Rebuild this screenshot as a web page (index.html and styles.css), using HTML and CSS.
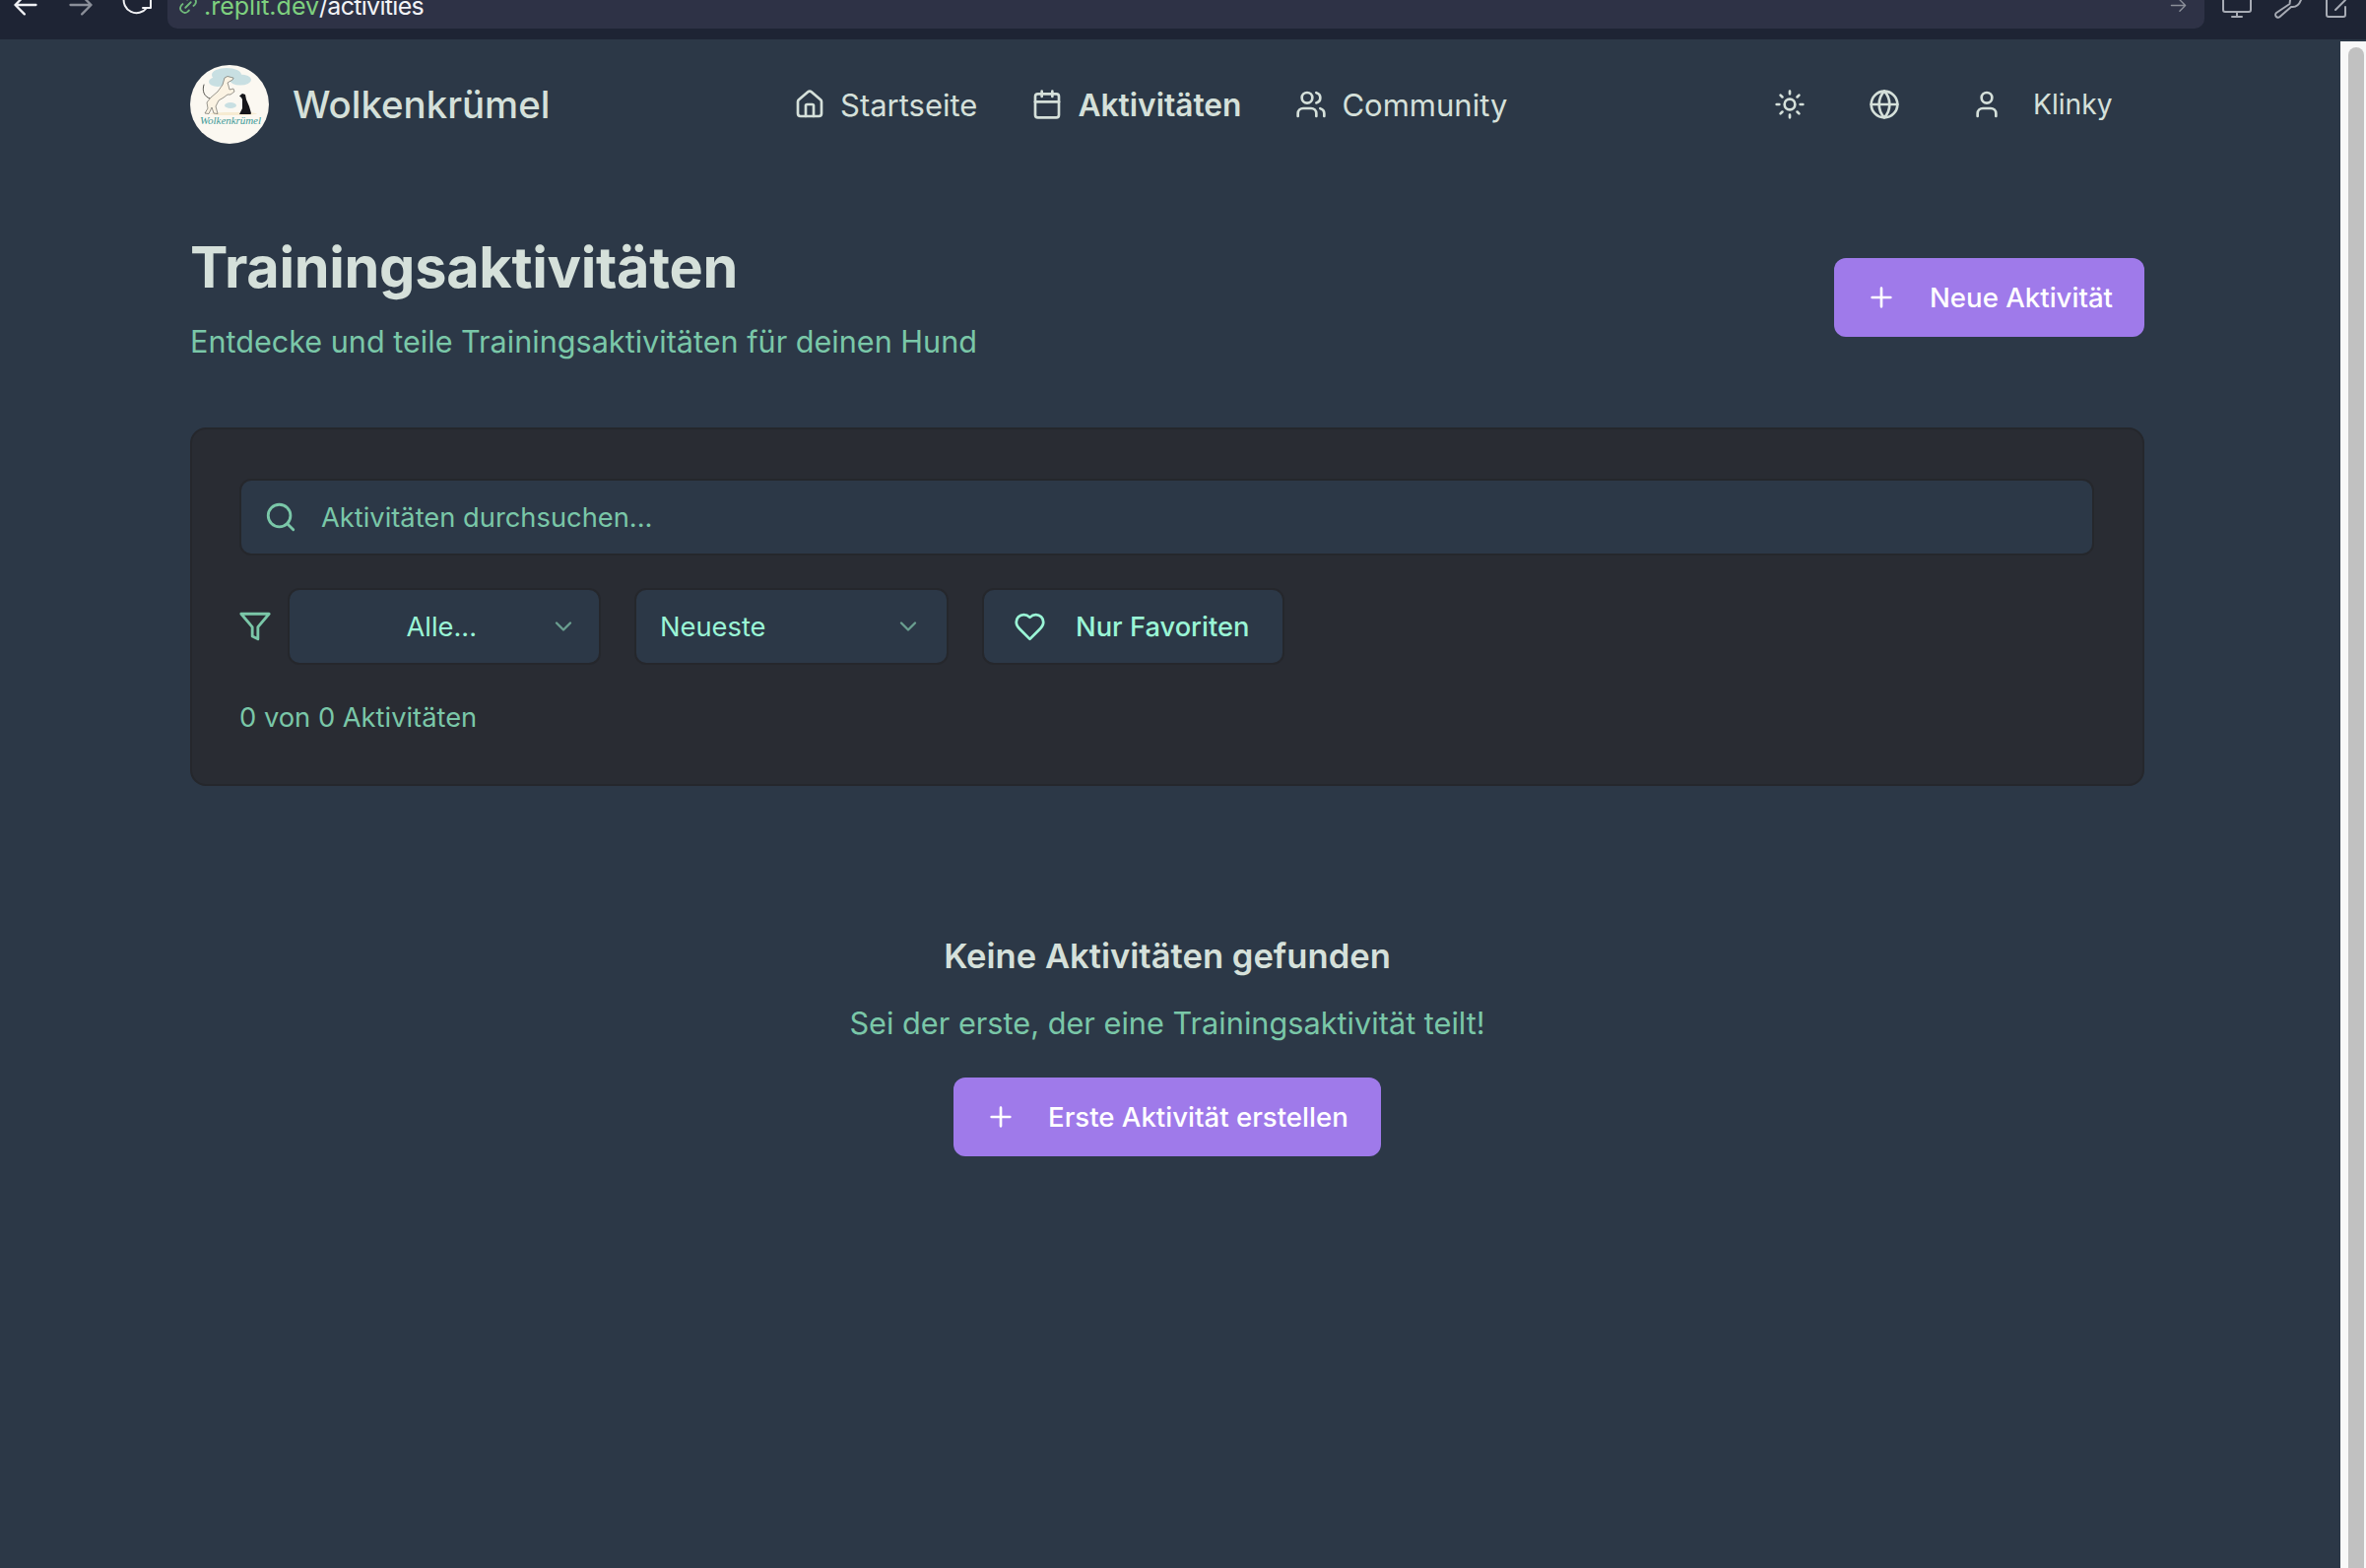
FILE: index.html
```html
<!DOCTYPE html>
<html lang="de">
<head>
<meta charset="utf-8">
<title>Wolkenkrümel</title>
<link rel="stylesheet" href="styles.css">
</head>
<body>
<div class="chrome">
  <div class="chrome-nav">
    <svg class="ci ci-light" viewBox="0 0 24 24"><path d="M21 12H3M11 4l-8 8 8 8"/></svg>
    <svg class="ci ci-dim" viewBox="0 0 24 24"><path d="M3 12h18M13 4l8 8-8 8"/></svg>
    <svg class="ci-reload" viewBox="0 0 32 32"><path d="M4 10A13 13 0 0 0 27 21M23 21h8V10"/></svg>
  </div>
  <div class="urlbar">
    <svg class="link-ic" viewBox="0 0 24 24"><path d="M9 15l6-6"/><path d="M11 6l1.500-1.500a5 5 0 0 1 7 7L18 13"/><path d="M13 18l-1.500 1.500a5 5 0 0 1-7-7L6 11"/></svg>
    <span class="url"><span class="url-host">.replit.dev</span><span class="url-path">/activities</span></span>
    <svg class="url-go" viewBox="0 0 24 24"><path d="M2 12h20M14 4l8 8-8 8"/></svg>
  </div>
  <div class="chrome-tools">
    <svg class="ct ct-monitor" viewBox="0 0 30 20"><path d="M1 0v10a2 2 0 0 0 2 2h24a2 2 0 0 0 2-2V0M15 12v5M10 17h10"/></svg>
    <svg class="ct ct-wrench" viewBox="0 0 28 20"><path d="M16 0l-.500 4L2 13a2.500 2.500 0 0 0 3.500 4L17 7q7 1 10-7"/></svg>
    <svg class="ct ct-share" viewBox="0 0 24 20"><path d="M2 0v15a2 2 0 0 0 2 2h15a2 2 0 0 0 2-2V7M11 10L21 0"/></svg>
  </div>
</div>

<div class="viewport">
  <div class="page">
    <header class="topbar">
      <a class="brand">
        <svg class="logo" viewBox="0 0 80 80">
          <circle cx="40" cy="40" r="40" fill="#fbf8f1"/>
          <g fill="#c8dfe2">
            <ellipse cx="37" cy="10" rx="15" ry="7"/>
            <ellipse cx="28" cy="17" rx="9" ry="5"/>
            <ellipse cx="51" cy="15" rx="11" ry="5.500"/>
            <ellipse cx="41" cy="41" rx="6" ry="3"/>
          </g>
          <ellipse cx="44" cy="49.500" rx="24" ry="1.600" fill="#f6ebd2"/>
          <path d="M20 34C14 32 12 26 14 20" fill="none" stroke="#55534e" stroke-width="1"/>
          <path d="M43.700 13L38 11.500 35 13 33 20 28 27 21 33 17 38 18 44 15 49 19 49.500 22 43 24 49 28 49.500 26 42 29 36 34 33 38 30 41 30 45 27 44 24 40 25 39 21 38 18 43 15z" fill="#fbf3e3" stroke="#6f6d66" stroke-width=".7" stroke-linejoin="round"/>
          <path d="M50 31.500L53 29 56 30 57 35 60 42 62 49 61.500 50 50 50 53 44 53 35 52 33z" fill="#15151a"/>
          <text class="logo-text" x="10" y="60" textLength="62">Wolkenkrümel</text>
        </svg>
        <span class="brand-name">Wolkenkrümel</span>
      </a>
      <nav class="nav">
        <a class="nav-link">
          <svg class="ic ic-nav" viewBox="0 0 24 24"><path d="M15 21v-8a1 1 0 0 0-1-1h-4a1 1 0 0 0-1 1v8"/><path d="M3 10a2 2 0 0 1 .7-1.500l7-6a2 2 0 0 1 2.600 0l7 6a2 2 0 0 1 .7 1.500v9a2 2 0 0 1-2 2H5a2 2 0 0 1-2-2z"/></svg>
          <span>Startseite</span>
        </a>
        <a class="nav-link nav-active">
          <svg class="ic ic-nav" viewBox="0 0 24 24"><path d="M8 2v4M16 2v4"/><rect x="3" y="4" width="18" height="18" rx="2"/><path d="M3 10h18"/></svg>
          <span>Aktivitäten</span>
        </a>
        <a class="nav-link">
          <svg class="ic ic-nav" viewBox="0 0 24 24"><path d="M16 21v-2a4 4 0 0 0-4-4H6a4 4 0 0 0-4 4v2"/><circle cx="9" cy="7" r="4"/><path d="M22 21v-2a4 4 0 0 0-3-3.870M16 3.130a4 4 0 0 1 0 7.750"/></svg>
          <span>Community</span>
        </a>
      </nav>
      <div class="actions">
        <svg class="ic ic-nav" viewBox="0 0 24 24"><circle cx="12" cy="12" r="4"/><path d="M12 2v2M12 20v2M4.930 4.930l1.410 1.410M17.660 17.660l1.410 1.410M2 12h2M20 12h2M6.340 17.660l-1.410 1.410M19.070 4.930l-1.410 1.410"/></svg>
        <svg class="ic ic-nav" viewBox="0 0 24 24"><circle cx="12" cy="12" r="10"/><path d="M12 2a14.500 14.500 0 0 0 0 20 14.500 14.500 0 0 0 0-20M2 12h20"/></svg>
        <a class="user">
          <svg class="ic ic-nav" viewBox="0 0 24 24"><path d="M19 21v-2a4 4 0 0 0-4-4H9a4 4 0 0 0-4 4v2"/><circle cx="12" cy="7" r="4"/></svg>
          <span>Klinky</span>
        </a>
      </div>
    </header>

    <main class="content">
      <section class="head">
        <div>
          <h1 class="title">Trainingsaktivitäten</h1>
          <p class="subtitle">Entdecke und teile Trainingsaktivitäten für deinen Hund</p>
        </div>
        <button class="btn btn-new">
          <svg class="ic ic-btn" viewBox="0 0 24 24"><path d="M5 12h14M12 5v14"/></svg>
          <span>Neue Aktivität</span>
        </button>
      </section>

      <section class="card">
        <div class="search">
          <svg class="ic ic-green ic-search" viewBox="0 0 24 24"><path d="m21 21-4.300-4.300"/><circle cx="11" cy="11" r="8"/></svg>
          <span class="placeholder">Aktivitäten durchsuchen...</span>
        </div>
        <div class="filters">
          <svg class="ic ic-green ic-funnel" viewBox="0 0 24 24"><path d="M22 3H2l8 9.460V19l4 2v-8.540z"/></svg>
          <div class="select select-all">
            <span class="select-center">Alle...</span>
            <svg class="chev" viewBox="0 0 24 24"><path d="m6 9 6 6 6-6"/></svg>
          </div>
          <div class="select select-sort">
            <span>Neueste</span>
            <svg class="chev" viewBox="0 0 24 24"><path d="m6 9 6 6 6-6"/></svg>
          </div>
          <div class="select fav">
            <svg class="ic ic-mint ic-heart" viewBox="0 0 24 24"><path d="M19 14c1.490-1.460 3-3.210 3-5.500A5.500 5.500 0 0 0 16.500 3c-1.760 0-3 .5-4.500 2-1.500-1.500-2.740-2-4.500-2A5.500 5.500 0 0 0 2 8.500c0 2.300 1.500 4.050 3 5.500l7 7z"/></svg>
            <span>Nur Favoriten</span>
          </div>
        </div>
        <p class="count">0 von 0 Aktivitäten</p>
      </section>

      <section class="empty">
        <h2 class="empty-title">Keine Aktivitäten gefunden</h2>
        <p class="empty-text">Sei der erste, der eine Trainingsaktivität teilt!</p>
        <button class="btn btn-first">
          <svg class="ic ic-btn" viewBox="0 0 24 24"><path d="M5 12h14M12 5v14"/></svg>
          <span>Erste Aktivität erstellen</span>
        </button>
      </section>
    </main>
  </div>
  <div class="scrollbar"><div class="thumb"></div></div>
</div>
</body>
</html>
```

FILE: styles.css
```css
* { box-sizing: border-box; }
html, body { height: 100%; }
body {
  margin: 0;
  display: flex;
  flex-direction: column;
  overflow: hidden;
  background: #2c3847;
  font-family: "Inter", "Liberation Sans", sans-serif;
  color: #d5e0da;
}
svg { display: block; flex: none; fill: none; stroke-linecap: round; stroke-linejoin: round; }

/* browser chrome */
.chrome {
  flex: none;
  height: 40px;
  background: #1e2434;
  display: flex;
  overflow: hidden;
  align-items: flex-start;
}
.chrome-nav { width: 170px; height: 20px; display: flex; align-items: flex-start; gap: 28px; padding-left: 12px; }
.ci { width: 28px; height: 28px; stroke-width: 2; margin-top: -9px; }
.ci-light { stroke: #f0f1f4; }
.ci-dim { stroke: #8b8f99; }
.ci-reload { width: 32px; height: 32px; margin: -13px 0 0 -2px; stroke: #f0f1f4; stroke-width: 2; }
.urlbar {
  width: 2068px;
  height: 29px;
  background: #2e3246;
  border-radius: 0 0 10px 10px;
  display: flex;
  align-items: flex-start;
  padding: 0 18px 0 10px;
  color: #fff;
}
.link-ic { width: 22px; height: 22px; stroke: #6fb87a; stroke-width: 2; margin: -6px 5px 0 0; }
.url { font-size: 25px; line-height: 30px; margin-top: -9px; color: #f2f3f6; white-space: nowrap; }
.url-host { color: #7ed07f; }
.url-path { letter-spacing: -0.7px; }
.url-go { width: 17px; height: 17px; stroke: #8b8f99; stroke-width: 2; margin: -3px 0 0 auto; }
.chrome-tools { display: flex; align-items: flex-start; padding-left: 18px; }
.ct { height: 20px; stroke: #a7abb4; stroke-width: 2; }
.ct-monitor { width: 30px; }
.ct-wrench { width: 28px; margin-left: 23px; }
.ct-share { width: 24px; margin-left: 23px; }

/* viewport */
.viewport { flex: 1; display: flex; min-height: 0; }
.page { flex: 1; min-width: 0; padding: 0 199px 0 193px; }
.scrollbar { flex: none; width: 26px; margin-top: 2px; background: #f8f8f8; padding: 6px 2px 0 8px; }
.thumb { height: 100%; background: #c1c1c1; border-radius: 8px 8px 0 0; }

/* top bar */
.topbar { display: flex; align-items: center; height: 80px; margin-top: 26px; }
.brand { display: flex; align-items: center; gap: 24px; width: 613px; }
.logo { width: 80px; height: 80px; }
.logo-text { font-family: "Liberation Serif", serif; font-style: italic; font-size: 11px; fill: #3f9a98; }
.brand-name { font-size: 38.400px; font-weight: 500; color: #d5e0da; }
.nav { display: flex; gap: 55px; width: 995px; }
.nav-link { display: flex; align-items: center; gap: 15px; font-size: 31px; font-weight: 400; }
.nav-active { font-size: 31.700px; font-weight: 600; }
.ic { width: 32px; height: 32px; stroke: currentColor; stroke-width: 2; }
.actions { display: flex; align-items: center; gap: 64px; }
.user { display: flex; align-items: center; gap: 31px; margin-left: 8px; font-size: 28.200px; }

/* content */
.content { display: flex; flex-direction: column; }
.head { display: flex; justify-content: space-between; align-items: flex-start; margin-top: 93px; }
.title { margin: 0; font-size: 57.600px; font-weight: 700; line-height: 64px; letter-spacing: -0.3px; color: #d5e0da; }
.subtitle { margin: 20px 0 0; font-size: 30.600px; line-height: 48px; color: #7ac7a8; }
.btn {
  display: flex;
  align-items: center;
  height: 80px;
  border: 0;
  border-radius: 12px;
  background: #9f7aea;
  color: #fff;
  font: 500 27.600px "Inter", "Liberation Sans", sans-serif;
}
.btn-new { width: 315px; margin-top: 23px; padding-left: 32px; gap: 33px; }
.btn-first { width: 434px; padding-left: 32px; gap: 32px; margin-top: 31px; }
.ic-btn { width: 32px; height: 32px; }

/* card */
.card {
  margin-top: 63px;
  height: 364px;
  padding: 50px 49px 50px 48px;
  background: #292c33;
  border: 2px solid #25272c;
  border-radius: 16px;
}
.search, .select {
  background: #2c3847;
  border: 2px solid #25272c;
  border-radius: 12px;
  display: flex;
  align-items: center;
  height: 78px;
}
.search { padding-left: 23px; gap: 24px; font-size: 27.300px; color: #7ac7a8; }
.ic-green { color: #7ac7a8; }
.ic-search { width: 34px; height: 34px; }
.filters { display: flex; align-items: center; margin-top: 33px; }
.ic-funnel { width: 34px; height: 34px; margin: 0 16px 0 -1px; }
.select { color: #9af5d6; font-size: 27.300px; }
.select-all { width: 318px; padding: 0 22px 0 0; margin-right: 34px; justify-content: flex-end; }
.select-center { margin-right: 74px; }
.select-sort { width: 319px; padding: 0 25px 0 24px; justify-content: space-between; margin-right: 34px; }
.fav { width: 307px; padding-left: 30px; gap: 30px; font-weight: 500; }
.ic-heart { width: 33px; height: 33px; }
.chev { width: 28px; height: 28px; stroke: #6a9f90; stroke-width: 2; }
.count { margin: 34px 0 0; font-size: 27.300px; line-height: 40px; color: #7ac7a8; }

/* empty state */
.empty { display: flex; flex-direction: column; align-items: center; margin-top: 148px; }
.empty-title { margin: 0; font-size: 34.600px; line-height: 48px; font-weight: 600; color: #d5e0da; }
.empty-text { margin: 21px 0 0; font-size: 30.700px; line-height: 48px; color: #7ac7a8; }
```
